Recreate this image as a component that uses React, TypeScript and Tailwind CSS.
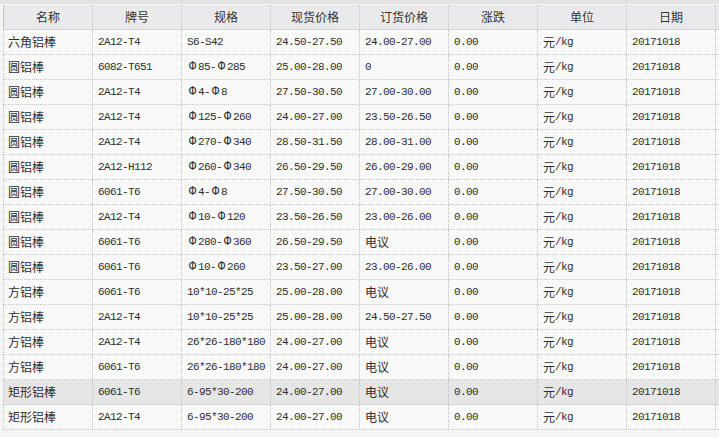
const headers = ["名称", "牌号", "规格", "现货价格", "订货价格", "涨跌", "单位", "日期"];

const rows: string[][] = [
  ["六角铝棒", "2A12-T4", "S6-S42", "24.50-27.50", "24.00-27.00"],
  ["圆铝棒", "6082-T651", "Φ85-Φ285", "25.00-28.00", "0"],
  ["圆铝棒", "2A12-T4", "Φ4-Φ8", "27.50-30.50", "27.00-30.00"],
  ["圆铝棒", "2A12-T4", "Φ125-Φ260", "24.00-27.00", "23.50-26.50"],
  ["圆铝棒", "2A12-T4", "Φ270-Φ340", "28.50-31.50", "28.00-31.00"],
  ["圆铝棒", "2A12-H112", "Φ260-Φ340", "26.50-29.50", "26.00-29.00"],
  ["圆铝棒", "6061-T6", "Φ4-Φ8", "27.50-30.50", "27.00-30.00"],
  ["圆铝棒", "2A12-T4", "Φ10-Φ120", "23.50-26.50", "23.00-26.00"],
  ["圆铝棒", "6061-T6", "Φ280-Φ360", "26.50-29.50", "电议"],
  ["圆铝棒", "6061-T6", "Φ10-Φ260", "23.50-27.00", "23.00-26.00"],
  ["方铝棒", "6061-T6", "10*10-25*25", "25.00-28.00", "电议"],
  ["方铝棒", "2A12-T4", "10*10-25*25", "25.00-28.00", "24.50-27.50"],
  ["方铝棒", "2A12-T4", "26*26-180*180", "24.00-27.00", "电议"],
  ["方铝棒", "6061-T6", "26*26-180*180", "24.00-27.00", "电议"],
  ["矩形铝棒", "6061-T6", "6-95*30-200", "24.00-27.00", "电议"],
  ["矩形铝棒", "2A12-T4", "6-95*30-200", "24.00-27.00", "电议"],
];

// split text into CJK / Φ / latin runs so each gets its own font
const Text = ({ value }: { value: string }) => {
  const parts = value.match(/[\u4e00-\u9fff]+|Φ|[^\u4e00-\u9fffΦ]+/g) || [];
  return (
    <>
      {parts.map((p, i) => {
        if (p === "Φ")
          return (
            <span
              key={i}
              className="inline-block w-[11px] text-center font-['Liberation_Mono',monospace] text-[12px]"
            >
              Φ
            </span>
          );
        if (/[\u4e00-\u9fff]/.test(p))
          return (
            <span key={i} className="font-['Noto_Sans_CJK_SC',sans-serif] text-[12px]">
              {p}
            </span>
          );
        return (
          <span key={i} className="font-['Liberation_Mono',monospace] text-[11px] tracking-[-0.6px]">
            {p}
          </span>
        );
      })}
    </>
  );
};

const App = () => {
  return (
    <div className="w-[719px] h-[437px] bg-[#f5f5f5] text-[#2e2e2e] overflow-hidden">
      <div className="h-[4px] bg-[#e4e4e4]" />
      <div className="h-[1px] bg-[#f7f7f7]" />
      <div className="pl-[3px]">
        <div className="flex h-[25px] bg-[#eaeaec] border-b border-solid border-[#d6d6d6] border-l border-l-dotted border-l-[#c4c4c4]">
          {headers.map((h) => (
            <div
              key={h}
              className="w-[89px] flex items-center justify-center border-r border-dotted border-[#c4c4c4] font-['Noto_Sans_CJK_SC',sans-serif] text-[12px] text-[#333]"
            >
              {h}
            </div>
          ))}
        </div>
        {rows.map((r, i) => {
          const cells = [...r, "0.00", "元/kg", "20171018"];
          return (
            <div
              key={i}
              className={`flex h-[25px] border-b border-dotted border-[#c4c4c4] border-l ${
                i === 14 ? "bg-[#e6e6e6]" : "bg-[#f9f9f9]"
              }`}
            >
              {cells.map((c, j) => (
                <div
                  key={j}
                  className={`w-[89px] flex items-center whitespace-nowrap border-r border-dotted border-[#c4c4c4] ${
                    j === 0 ? "pl-[4px]" : "pl-[5px]"
                  }`}
                >
                  <Text value={c} />
                </div>
              ))}
            </div>
          );
        })}
      </div>
    </div>
  );
};

export default App;
